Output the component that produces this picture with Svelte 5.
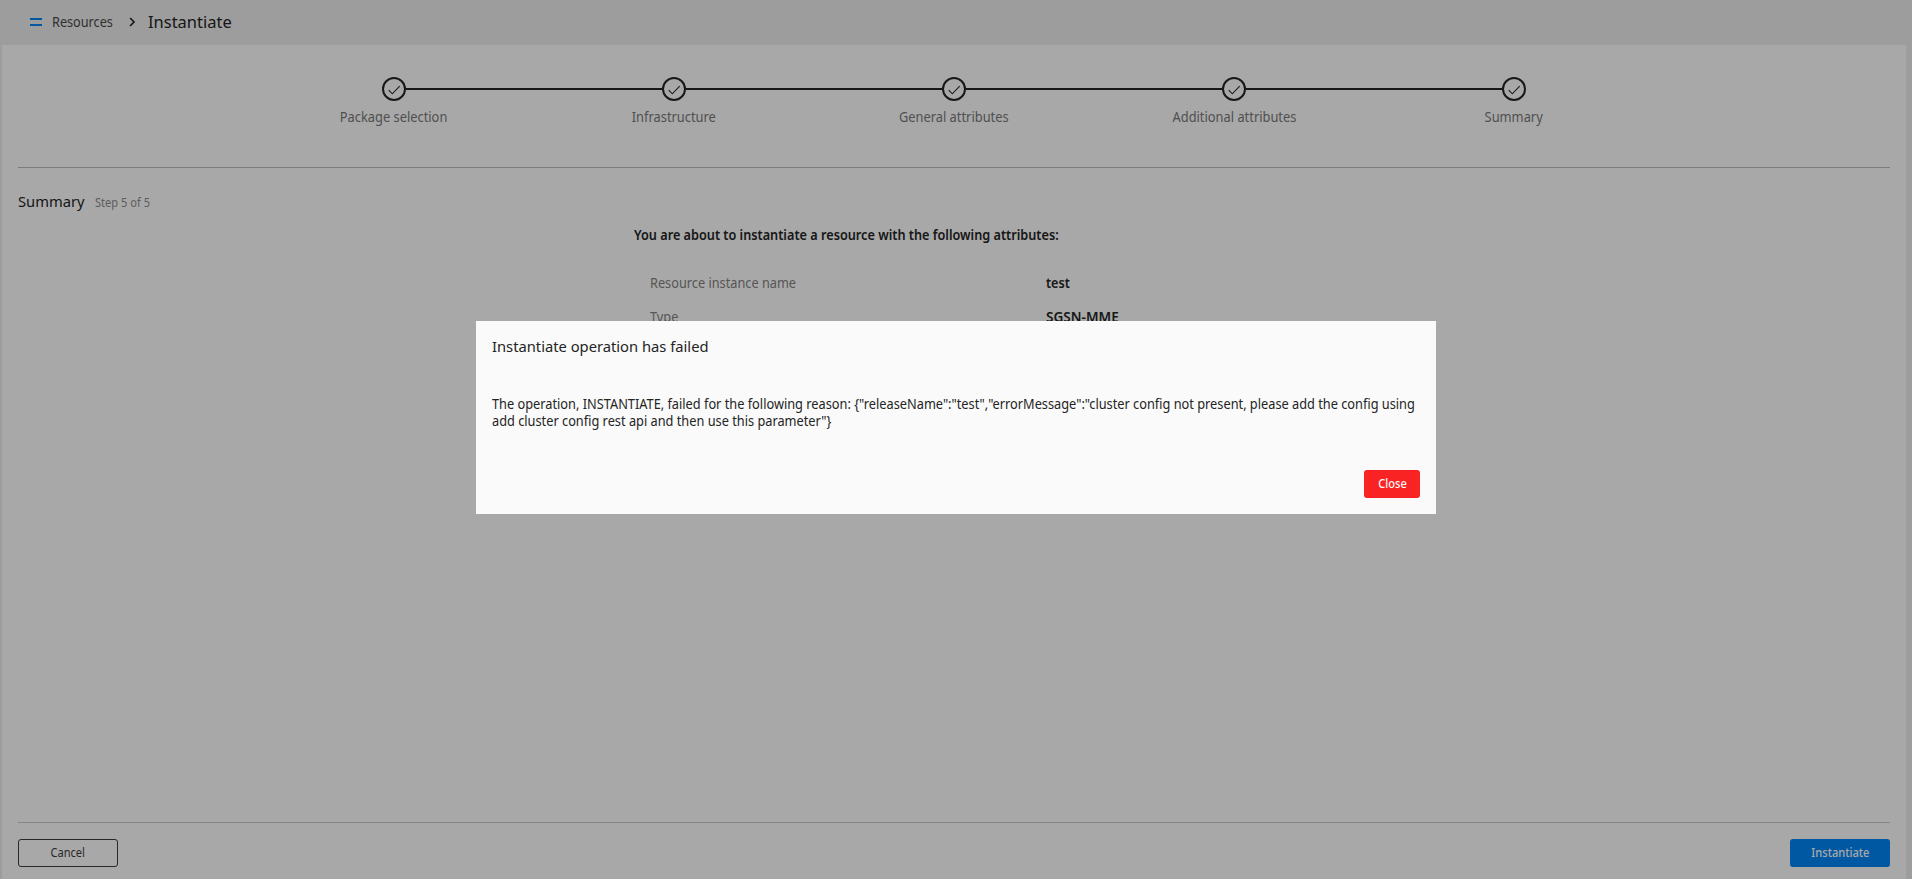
<script>
  const steps = ['Package selection', 'Infrastructure', 'General attributes', 'Additional attributes', 'Summary'];
  const attributes = [
    { label: 'Resource instance name', value: 'test', narrow: 0.9 },
    { label: 'Type', value: 'SGSN-MME', narrow: 0.97 }
  ];
  const reason =
    'The operation, INSTANTIATE, failed for the following reason: {"releaseName":"test","errorMessage":"cluster config not present, please add the config using add cluster config rest api and then use this parameter"}';
</script>

<div class="app">
  <header>
    <svg class="menu" width="12" height="8" viewBox="0 0 12 8"><path d="M0 0h12v2H0zM0 6h12v2H0z" fill="#0082f0" /></svg>
    <span class="crumb">Resources</span>
    <svg class="chevron" width="7" height="10" viewBox="0 0 7 10"><path d="M1.1 1 5 5 1.1 9" fill="none" stroke="#242424" stroke-width="1.7" /></svg>
    <span class="current">Instantiate</span>
  </header>

  <main>
    <ol class="steps">
      {#each steps as step}
        <li>
          <div class="track">
            <i></i>
            <svg width="24" height="24" viewBox="0 0 24 24" fill="none" stroke="#242424">
              <circle cx="12" cy="12" r="11" stroke-width="2" />
              <path d="M6.7 13.2 10.3 16.8 17.7 9.2" stroke-width="1.1" />
            </svg>
            <i></i>
          </div>
          <span>{step}</span>
        </li>
      {/each}
    </ol>

    <section>
      <div class="title">
        <h1>Summary</h1>
        <span>Step 5 of 5</span>
      </div>
      <div class="details">
        <p>You are about to instantiate a resource with the following attributes:</p>
        <dl>
          {#each attributes as { label, value, narrow }}
            <dt>{label}</dt>
            <dd style="transform: scaleX({narrow})">{value}</dd>
          {/each}
        </dl>
      </div>
    </section>

    <footer>
      <button class="cancel"><span>Cancel</span></button>
      <button class="primary"><span>Instantiate</span></button>
    </footer>
  </main>
</div>

<div class="overlay">
  <div class="dialog" role="alertdialog">
    <h2>Instantiate operation has failed</h2>
    <p>{reason}</p>
    <button class="close"><span>Close</span></button>
  </div>
</div>

<style>
  :global(body) {
    overflow: hidden;
  }
  .app,
  .overlay {
    box-sizing: border-box;
    width: 100vw;
    height: 100vh;
    font: 14px 'Noto Sans', sans-serif;
    color: #242424;
  }
  .app {
    display: flex;
    flex-direction: column;
    background: #e9e9e9;
  }
  h1,
  h2,
  p,
  dl,
  dd,
  ol {
    margin: 0;
    padding: 0;
    font-weight: 400;
  }
  header {
    display: flex;
    align-items: center;
    box-sizing: border-box;
    height: 45px;
    padding: 0 30px 1px;
  }
  .menu {
    margin-right: 10px;
  }
  .crumb {
    width: 60px;
    line-height: 20px;
    padding-bottom: 1px;
    margin-right: 17px;
    transform: scaleX(0.905);
    transform-origin: left;
    color: #484848;
  }
  .chevron {
    margin: 0 12px 1px 0;
  }
  .current {
    font-size: 16px;
    line-height: 20px;
    padding-bottom: 1px;
    transform: scaleX(1.03);
    transform-origin: left;
  }
  main {
    flex: 1;
    display: flex;
    flex-direction: column;
    margin: 0 6px 0 2px;
    padding: 0 16px;
    background: #fafafa;
  }
  .steps {
    display: flex;
    justify-content: center;
    box-sizing: border-box;
    height: 123px;
    padding-top: 32px;
    list-style: none;
    border-bottom: 1px solid #b8b8b8;
  }
  li {
    display: flex;
    flex-direction: column;
    align-items: center;
    width: 280px;
    line-height: 20px;
    color: #767676;
  }
  li span {
    margin-top: 6px;
    transform: scaleX(0.918);
  }
  .track {
    display: flex;
    align-items: center;
    width: 100%;
  }
  .track i {
    flex: 1;
    height: 2px;
    background: #242424;
  }
  li:first-child i:first-child,
  li:last-child i:last-child {
    background: none;
  }
  section {
    flex: 1;
    padding-top: 22px;
  }
  .title {
    display: flex;
    align-items: baseline;
    height: 22px;
    line-height: 22px;
  }
  .title span {
    font-size: 12px;
    color: #8a8a8a;
    transform: scaleX(0.925);
    transform-origin: left;
  }
  h1 {
    width: 77px;
    font-size: 15px;
    line-height: 23px;
    transform: scaleX(0.98);
    transform-origin: left;
  }
  .details {
    width: 640px;
    margin: 13px auto 0;
    line-height: 20px;
  }
  .details p {
    font-weight: 600;
    transform: scaleX(0.906);
    transform-origin: left;
  }
  dl {
    display: grid;
    grid-template-columns: 396px 1fr;
    row-gap: 14px;
    padding: 28px 16px 0;
  }
  dt {
    color: #808080;
    transform: scaleX(0.91);
    transform-origin: left;
  }
  dd {
    font-weight: 600;
    transform-origin: left;
  }
  footer {
    display: flex;
    justify-content: space-between;
    box-sizing: border-box;
    height: 57px;
    padding-top: 16px;
    border-top: 1px solid #c6c6c6;
  }
  button {
    box-sizing: border-box;
    width: 100px;
    height: 28px;
    padding: 0;
    border: 0;
    border-radius: 3px;
    font: 12px/24px 'Noto Sans', sans-serif;
    color: #fafafa;
  }
  button span {
    display: inline-block;
    transform: scaleX(0.925);
  }
  .cancel {
    border: 1px solid #3c3c3c;
    background: none;
    color: #3c3c3c;
  }
  .primary {
    background: #0082f0;
    font-weight: 500;
  }
  .overlay {
    position: fixed;
    inset: 0;
    display: flex;
    justify-content: center;
    align-items: flex-start;
    padding-top: 321px;
    background: rgba(0, 0, 0, 0.325);
  }
  .dialog {
    display: flex;
    flex-direction: column;
    box-sizing: border-box;
    width: 960px;
    height: 193px;
    padding: 16px;
    background: #fafafa;
  }
  h2 {
    font-size: 15px;
    line-height: 18px;
    transform: scaleX(0.982);
    transform-origin: left;
  }
  .dialog p {
    width: 1017px;
    margin-top: 40px;
    line-height: 17px;
    transform: scaleX(0.912);
    transform-origin: left;
  }
  .close {
    align-self: flex-end;
    width: 56px;
    margin-top: auto;
    background: #fa2323;
    font-weight: 500;
  }
</style>
